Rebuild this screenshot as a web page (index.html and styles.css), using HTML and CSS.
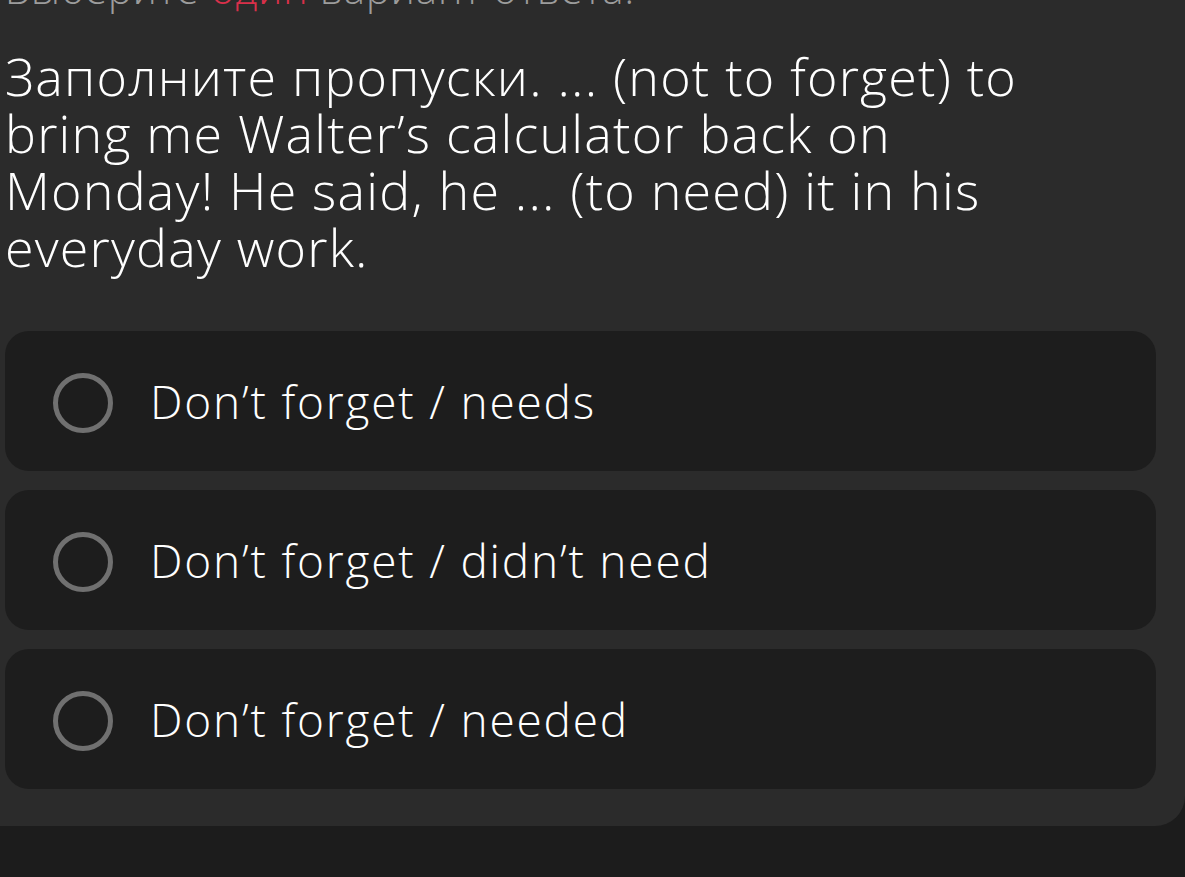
FILE: index.html
```html
<!DOCTYPE html>
<html lang="ru">
<head>
  <meta charset="UTF-8">
  <title>Тест</title>
  <link rel="stylesheet" href="styles.css">
</head>
<body>
  <div class="panel">
    <p class="hint">Выберите <span class="accent">один</span> вариант ответа.</p>

    <h2 class="question">Заполните пропуски. ... (not to forget) to bring me Walter’s calculator back on Monday! He said, he ... (to need) it in his everyday work.</h2>

    <!-- answer options -->
    <div class="options">
      <label class="option">
        <span class="radio"></span>
        <span class="option-text">Don’t forget / needs</span>
      </label>
      <label class="option">
        <span class="radio"></span>
        <span class="option-text">Don’t forget / didn’t need</span>
      </label>
      <label class="option">
        <span class="radio"></span>
        <span class="option-text">Don’t forget / needed</span>
      </label>
    </div>
  </div>
</body>
</html>
```

FILE: styles.css
```css
body {
  font-family: "Open Sans", "Noto Sans", sans-serif;
  background-color: #1c1c1c;
  margin: 0;
  padding: 0;
  overflow: hidden;
}
.panel {
  background: #2b2b2b;
  padding: 0 29px 37px 5px;
  border-radius: 0 0 30px 0;
}
.hint {
  margin: -34px 0 0;
  font-size: 40px;
  line-height: 46px;
  font-weight: 300;
  letter-spacing: 1px;
  color: #9c9c9c;
}
.accent {
  color: #d9304a;
}
.question {
  margin: 35px 0 56px;
  max-width: 1040px;
  font-size: 52px;
  line-height: 57px;
  font-weight: 300;
  letter-spacing: 1.2px;
  color: #fff;
}
.options {
  display: flex;
  flex-direction: column;
  gap: 19px;
}
.option {
  display: flex;
  align-items: center;
  gap: 37px;
  height: 140px;
  padding-left: 48px;
  background: #1d1d1d;
  border-radius: 24px;
  box-sizing: border-box;
  cursor: pointer;
}
.radio {
  width: 60px;
  height: 60px;
  border: 5.5px solid #707070;
  border-radius: 50%;
  box-sizing: border-box;
  flex-shrink: 0;
  margin-top: 4px;
}
.option-text {
  font-size: 46px;
  font-weight: 300;
  letter-spacing: 1.8px;
  color: #fff;
}
```
